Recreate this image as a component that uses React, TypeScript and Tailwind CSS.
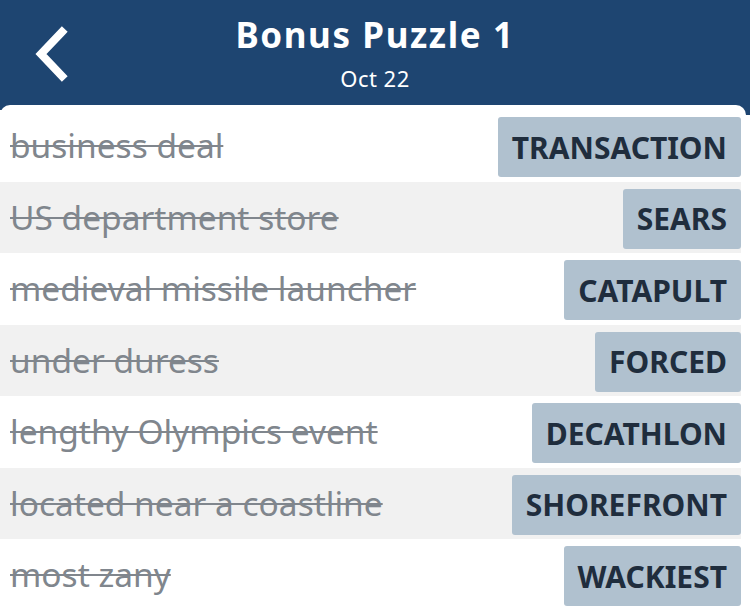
const clues = [
  { clue: 'business deal', answer: 'TRANSACTION' },
  { clue: 'US department store', answer: 'SEARS' },
  { clue: 'medieval missile launcher', answer: 'CATAPULT' },
  { clue: 'under duress', answer: 'FORCED' },
  { clue: 'lengthy Olympics event', answer: 'DECATHLON' },
  { clue: 'located near a coastline', answer: 'SHOREFRONT' },
  { clue: 'most zany', answer: 'WACKIEST' },
];

const BackIcon = () => (
  <svg width="40" height="56" viewBox="0 0 40 56" fill="none">
    <path d="M29 6 L8 28 L29 50" stroke="white" strokeWidth="8" strokeLinecap="square" strokeLinejoin="miter" />
  </svg>
);

export default function App() {
  return (
    <div className="w-[750px] h-[611px] overflow-hidden bg-white font-['Noto_Sans','Open_Sans',sans-serif]">
      <div className="h-[115px] bg-[#1e4571] relative">
        <div className="absolute left-[33px] top-[26px]">
          <BackIcon />
        </div>
        <div className="flex flex-col items-center pt-[13px]">
          <h1 className="text-[35px] leading-[44px] font-bold tracking-[1.6px] text-white">Bonus Puzzle 1</h1>
          <p className="mt-[7px] text-[22px] leading-[28px] tracking-[0.5px] text-white">Oct 22</p>
        </div>
      </div>
      <div className="relative -mt-[10px] w-[746px] bg-white rounded-t-[10px] pt-[5px] pr-[5px]">
        {clues.map((c, i) => (
          <div
            key={c.answer}
            className={`flex items-start justify-between h-[71.5px] pt-[7px] ${i % 2 === 1 ? 'bg-[#f1f1f1]' : 'bg-white'}`}
          >
            <span className="pl-[10px] pt-[8px] text-[33.5px] leading-[40px] text-[#80868d] line-through decoration-[2px] whitespace-nowrap">
              {c.clue}
            </span>
            <span className="h-[60px] px-[14px] flex items-center bg-[#b0c1cf] rounded-[3px] text-[30px] font-bold text-[#1f2d3d]">
              {c.answer}
            </span>
          </div>
        ))}
      </div>
    </div>
  );
}
